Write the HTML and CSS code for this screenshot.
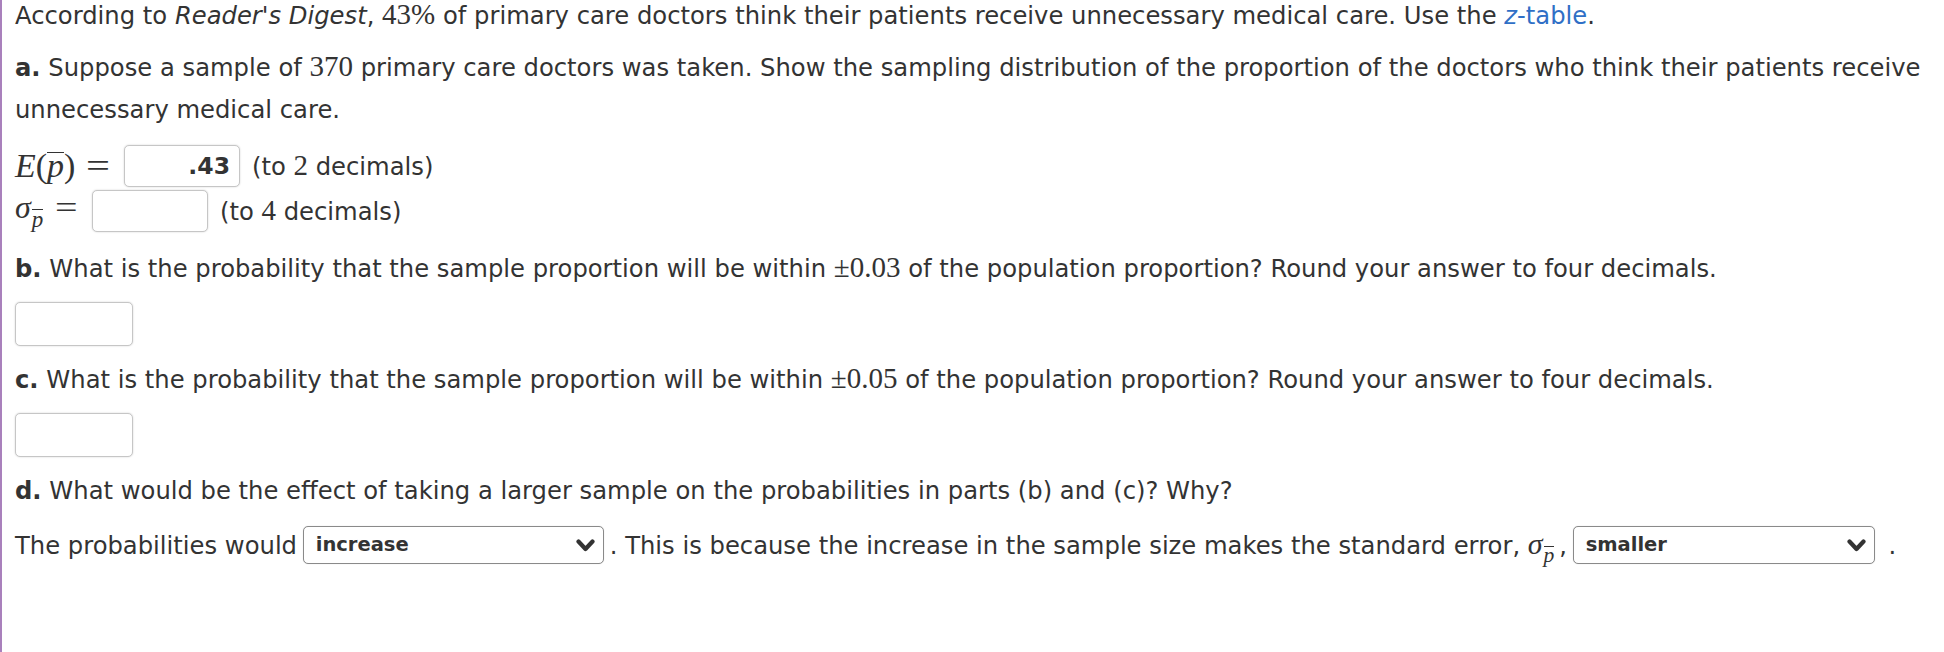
FILE: index.html
```html
<!DOCTYPE html>
<html lang="en">
<head>
<meta charset="utf-8">
<title>Sampling distribution of a proportion</title>
<link rel="stylesheet" href="styles.css">
</head>
<body>
<div class="page">
  <p class="intro">According to <i>Reader's Digest</i>, <span class="m">43%</span> of primary care doctors think their patients receive unnecessary medical care. Use the <a class="link" href="#"><i>z</i>-table</a>.</p>

  <p class="q q-a"><b>a.</b> Suppose a sample of <span class="m">370</span> primary care doctors was taken. Show the sampling distribution of the proportion of the doctors who think their patients receive unnecessary medical care.</p>

  <div class="mrow mrow-e">
    <span class="mlabel"><i>E</i>(<i class="ov">p</i>)<span class="eq">=</span></span>
    <span class="answer filled">.43</span>
    <span class="note">(to <span class="m">2</span> decimals)</span>
  </div>
  <div class="mrow mrow-s">
    <span class="mlabel"><i>σ</i><span class="sub"><i class="ov">p</i></span><span class="eq eq-s">=</span></span>
    <span class="answer"></span>
    <span class="note">(to <span class="m">4</span> decimals)</span>
  </div>

  <p class="q q-b"><b>b.</b> What is the probability that the sample proportion will be within <span class="m">±0.03</span> of the population proportion? Round your answer to four decimals.</p>
  <div class="answer block"></div>

  <p class="q q-c"><b>c.</b> What is the probability that the sample proportion will be within <span class="m">±0.05</span> of the population proportion? Round your answer to four decimals.</p>
  <div class="answer block"></div>

  <p class="q q-d"><b>d.</b> What would be the effect of taking a larger sample on the probabilities in parts (b) and (c)? Why?</p>

  <p class="q final">The probabilities would <span class="select sel1"><span class="sel-text">increase</span><svg class="chev" width="19" height="13" viewBox="0 0 19 13"><polyline points="2.5,2.5 9.5,10 16.5,2.5" fill="none" stroke="#333" stroke-width="4.2" stroke-linecap="round" stroke-linejoin="round"/></svg></span>. This is because the increase in the sample size makes the standard error, <span class="m sig"><i>σ</i><span class="sub"><i class="ov">p</i></span></span>&thinsp;, <span class="select sel2"><span class="sel-text">smaller</span><svg class="chev" width="19" height="13" viewBox="0 0 19 13"><polyline points="2.5,2.5 9.5,10 16.5,2.5" fill="none" stroke="#333" stroke-width="4.2" stroke-linecap="round" stroke-linejoin="round"/></svg></span> .</p>
</div>
</body>
</html>
```

FILE: styles.css
```css
html, body {
  margin: 0;
  padding: 0;
  background: #ffffff;
}

body {
  font-family: "DejaVu Sans", Verdana, sans-serif;
  font-size: 24.25px;
  color: #333333;
}

.page {
  border-left: 2px solid #a980bc;
  padding-left: 13px;
  padding-right: 0;
  min-height: 652px;
  box-sizing: border-box;
}

.intro {
  margin: 0;
  line-height: 30px;
}

.q {
  margin: 13px 0 0 0;
  line-height: 42px;
}

.q-a {
  margin-top: 16px;
}

.q-b {
  margin-top: 16px;
}

.m {
  font-family: "Liberation Serif", "Times New Roman", serif;
  font-size: 29px;
  line-height: 1;
}

.link {
  color: #2f6fc6;
  text-decoration: none;
}

.mrow {
  display: flex;
  align-items: center;
  height: 42px;
}

.mrow-e {
  margin-top: 14px;
}

.mrow-s {
  margin-top: 3px;
}

.mlabel {
  font-family: "Liberation Serif", "Times New Roman", serif;
  font-size: 32px;
  white-space: nowrap;
  line-height: 1;
}

.mrow-e .mlabel {
  width: 109px;
  font-size: 34px;
}

.mrow-s .mlabel {
  width: 77px;
}

.eq {
  display: inline-block;
  margin-left: 0.32em;
  transform: scaleX(1.25);
  transform-origin: left center;
}

.eq-s {
  margin-left: 0.36em;
}

.ov {
  display: inline-block;
  border-top: 1.8px solid currentColor;
  line-height: 0.7;
  padding-top: 1px;
}

.sub {
  font-size: 0.72em;
  vertical-align: -0.35em;
  margin-left: 1px;
}

.sig {
  font-size: 30px;
}

.answer {
  display: inline-flex;
  align-items: center;
  justify-content: flex-end;
  box-sizing: border-box;
  width: 116px;
  height: 42px;
  border: 1px solid #c6c6c6;
  border-radius: 5px;
  box-shadow: 0 0 2px rgba(0, 0, 0, 0.18);
  background: #fff;
  padding-right: 9px;
}

.filled {
  font-weight: bold;
  font-size: 23.5px;
}

.answer.block {
  display: block;
  width: 118px;
  height: 44px;
  margin-top: 12px;
}

.note {
  margin-left: 12px;
}

.select {
  display: inline-flex;
  align-items: center;
  justify-content: space-between;
  box-sizing: border-box;
  height: 38px;
  vertical-align: middle;
  border: 1.5px solid #8a8a8a;
  border-radius: 5px;
  background: #fff;
  padding: 0 8px 0 12px;
  margin: -4px 6px 0 -2px;
  box-shadow: 0 0 1px rgba(0, 0, 0, 0.2);
}

.sel1 {
  width: 301px;
}

.sel2 {
  width: 302px;
}

.sel-text {
  font-weight: bold;
  font-size: 19.5px;
  color: #333;
}

.chev {
  display: block;
}
```
